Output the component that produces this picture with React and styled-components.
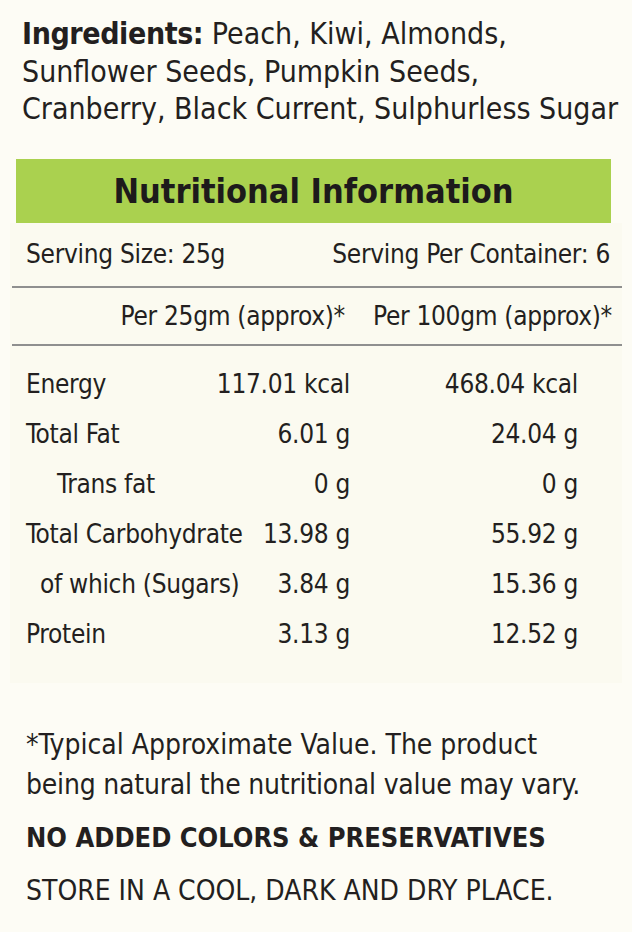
import styled, { createGlobalStyle } from 'styled-components';

const GlobalStyle = createGlobalStyle`
  html, body {
    margin: 0;
    padding: 0;
    background: #fdfcf5;
  }
  body {
    font-family: "Liberation Sans Narrow", "DejaVu Sans Condensed", "Roboto", sans-serif;
    color: #231f20;
  }
`;

const Label = styled.div`
  width: 632px;
  height: 932px;
  box-sizing: border-box;
  padding-top: 15px;
  overflow: hidden;
`;

const Ingredients = styled.p`
  margin: 0;
  padding-left: 22px;
  font-size: 30px;
  line-height: 37.5px;
  white-space: nowrap;
`;

const Strong = styled.strong`
  font-weight: 700;
  letter-spacing: -0.4px;
`;

const TitleBar = styled.h2`
  margin: 31px 21px 0 16px;
  height: 64px;
  background: #aad14f;
  display: flex;
  align-items: center;
  justify-content: center;
  font-size: 34px;
  font-weight: 700;
  color: #1d1a1b;
`;

const Panel = styled.section`
  margin: 0 10px;
  background: #fbfaf0;
  padding-bottom: 24px;
  font-size: 26px;
  letter-spacing: -0.3px;
`;

const ServingRow = styled.div`
  height: 63px;
  display: flex;
  align-items: center;
  justify-content: space-between;
  padding: 0 12px 0 16px;
`;

const Divider = styled.hr`
  margin: 0 0 0 2px;
  border: none;
  height: 2px;
  background: #8f8f8f;
`;

const HeadRow = styled.div`
  height: 56px;
  display: grid;
  grid-template-columns: 335px 1fr;
  align-items: center;
  white-space: nowrap;
`;

const HeadCell = styled.div`
  text-align: right;
  padding-right: ${props => props.$pad || 0}px;
`;

const Rows = styled.div`
  padding-top: 13px;
`;

const Row = styled.div`
  height: 50px;
  display: grid;
  grid-template-columns: minmax(0, 1fr) 160px 228px;
  padding: 0 44px 0 16px;
  align-items: center;
  line-height: 50px;
  white-space: nowrap;
`;

const Name = styled.div`
  padding-left: ${props => props.$indent || 0}px;
`;

const Value = styled.div`
  text-align: right;
`;

const Notes = styled.div`
  padding: 42px 0 0 26px;
  font-size: 28px;
  white-space: nowrap;
`;

const Note = styled.p`
  margin: 0 0 ${props => props.$gap || 0}px;
  line-height: 40px;
  font-weight: ${props => (props.$bold ? 700 : 400)};
  font-size: ${props => (props.$bold ? 27 : 28)}px;
  letter-spacing: ${props => (props.$tight ? -0.2 : 0)}px;
`;

const nutrients = [
  { name: 'Energy', a: '117.01 kcal', b: '468.04 kcal' },
  { name: 'Total Fat', a: '6.01 g', b: '24.04 g' },
  { name: 'Trans fat', a: '0 g', b: '0 g', indent: 31 },
  { name: 'Total Carbohydrate', a: '13.98 g', b: '55.92 g' },
  { name: 'of which (Sugars)', a: '3.84 g', b: '15.36 g', indent: 14 },
  { name: 'Protein', a: '3.13 g', b: '12.52 g' },
];

const App = () => (
  <>
    <GlobalStyle />
    <Label>
      <Ingredients>
        <Strong>Ingredients:</Strong> Peach, Kiwi, Almonds,<br />
        Sunflower Seeds, Pumpkin Seeds,<br />
        Cranberry, Black Current, Sulphurless Sugar
      </Ingredients>

      <TitleBar>Nutritional Information</TitleBar>

      <Panel>
        <ServingRow>
          <span>Serving Size: 25g</span>
          <span>Serving Per Container: 6</span>
        </ServingRow>
        <Divider />
        <HeadRow>
          <HeadCell>Per 25gm (approx)*</HeadCell>
          <HeadCell $pad={10}>Per 100gm (approx)*</HeadCell>
        </HeadRow>
        <Divider />
        <Rows>
          {nutrients.map(n => (
            <Row key={n.name}>
              <Name $indent={n.indent}>{n.name}</Name>
              <Value>{n.a}</Value>
              <Value>{n.b}</Value>
            </Row>
          ))}
        </Rows>
      </Panel>

      <Notes>
        <Note>*Typical Approximate Value. The product</Note>
        <Note $gap={13} $tight>being natural the nutritional value may vary.</Note>
        <Note $bold $gap={13}>NO ADDED COLORS &amp; PRESERVATIVES</Note>
        <Note>STORE IN A COOL, DARK AND DRY PLACE.</Note>
      </Notes>
    </Label>
  </>
);

export default App;
